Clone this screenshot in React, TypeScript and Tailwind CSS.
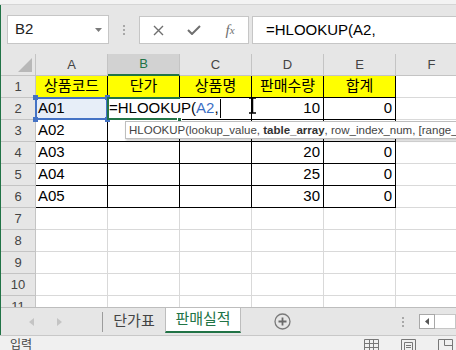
import React from 'react';

const cols = ['A', 'B', 'C', 'D', 'E', 'F'];
const headers = ['상품코드', '단가', '상품명', '판매수량', '합계'];
const rows = [
  ['A01', '', '', '10', '0'],
  ['A02', '', '', '', ''],
  ['A03', '', '', '20', '0'],
  ['A04', '', '', '25', '0'],
  ['A05', '', '', '30', '0'],
];

function GridRow({ n }: { n: number }) {
  return (
    <div className="flex h-[22px] shrink-0">
      <div className="w-[35px] shrink-0 border-r border-b border-[#c4c4c4] bg-[#e6e6e6] flex items-center justify-center text-[13px] text-[#444]">
        {n}
      </div>
      {cols.map((c, ci) => {
        const inTable = n <= 6 && ci < 5;
        const border = inTable ? 'border-black' : 'border-[#d9d9d9]';
        if (n === 1 && inTable) {
          return (
            <div key={c} className={`w-[72px] shrink-0 border-r border-b ${border} bg-[#ffff00] flex items-center justify-center text-[15px] text-black`}>
              {headers[ci]}
            </div>
          );
        }
        const value = inTable ? rows[n - 2][ci] : '';
        const right = ci >= 3;
        if (n === 2 && ci === 0) {
          return (
            <div key={c} className={`relative w-[72px] shrink-0 border-r border-b ${border} bg-[#e7eef8] flex items-center pl-[2px] text-[15px] text-black`}>
              {value}
              <div className="absolute -left-[1px] -top-[1px] w-[73px] h-[23px] border-2 border-[#4472c4]" />
              <div className="absolute -left-[3px] -top-[3px] w-[5px] h-[5px] bg-[#4472c4]" />
              <div className="absolute -right-[3px] -top-[3px] w-[5px] h-[5px] bg-[#4472c4]" />
              <div className="absolute -left-[3px] -bottom-[3px] w-[5px] h-[5px] bg-[#4472c4]" />
              <div className="absolute -right-[3px] -bottom-[3px] w-[5px] h-[5px] bg-[#4472c4]" />
            </div>
          );
        }
        if (n === 2 && ci === 1) {
          return (
            <div key={c} className={`relative w-[72px] shrink-0 border-r border-b ${border} bg-white`}>
              <div className="absolute -left-[1px] -top-[1px] w-[73px] h-[23px] border-2 border-[#217346]" />
              <div className="absolute left-[1px] top-[1px] h-[19px] bg-white border-r border-black pr-[1px] flex items-center whitespace-nowrap text-[15px] text-black">
                =HLOOKUP(<span className="text-[#3b6fc4]">A2</span>,
              </div>
              <div className="absolute -right-[3px] -bottom-[3px] w-[5px] h-[5px] bg-[#217346] border border-white" />
            </div>
          );
        }
        return (
          <div
            key={c}
            className={`w-[72px] shrink-0 border-r border-b ${border} bg-white flex items-center text-[15px] text-black ${right ? 'justify-end pr-[3px]' : 'pl-[2px]'}`}
          >
            {value}
          </div>
        );
      })}
    </div>
  );
}

export default function App() {
  return (
    <div className="relative w-[456px] h-[350px] overflow-hidden bg-[#e6e6e6] font-['Liberation_Sans','Noto_Sans_CJK_KR',sans-serif] text-[#222]">
      {/* ribbon edge */}
      <div className="h-[5px] bg-[#f3f3f3] border-b border-[#d5d5d5]" />

      <div className="flex flex-col h-[330px] border-l border-[#217346]">
        {/* Formula bar */}
        <div className="h-[49px] shrink-0 flex items-start pt-[10px] pl-[6px]">
          <div className="w-[102px] h-[29px] shrink-0 bg-white border border-[#c6c6c6] flex items-center pl-[7px] pr-[6px] text-[15px] text-[#222]">
            <span className="flex-1">B2</span>
            <svg width="7" height="4" viewBox="0 0 7 4">
              <path d="M0 0h7L3.5 4z" fill="#7a7a7a" />
            </svg>
          </div>
          <div className="w-[30px] h-[29px] shrink-0 flex flex-col items-center justify-center gap-[2px]">
            <div className="w-[2px] h-[2px] bg-[#a8a8a8]" />
            <div className="w-[2px] h-[2px] bg-[#a8a8a8]" />
            <div className="w-[2px] h-[2px] bg-[#a8a8a8]" />
          </div>
          <div className="mt-[1px] w-[110px] h-[28px] shrink-0 bg-white border border-[#c6c6c6] flex items-center">
            <div className="w-[36px] flex justify-center">
              <svg width="11" height="11" viewBox="0 0 11 11">
                <path d="M1 1l9 9M10 1l-9 9" stroke="#6f6f6f" strokeWidth="1.4" />
              </svg>
            </div>
            <div className="w-[36px] flex justify-center">
              <svg width="14" height="10" viewBox="0 0 14 10">
                <path d="M1 5l4 4 8-8" stroke="#6f6f6f" strokeWidth="2" fill="none" />
              </svg>
            </div>
            <div className="w-[36px] flex justify-center font-['Liberation_Serif',serif] italic text-[15px] text-[#6f6f6f] leading-none">
              f<span className="text-[11px] relative top-[2px]">x</span>
            </div>
          </div>
          <div className="ml-[3px] mt-[1px] flex-1 h-[28px] bg-white border-y border-l border-[#c6c6c6] flex items-center pl-[13px] text-[15px] text-black">
            =HLOOKUP(A2,
          </div>
        </div>

        {/* Grid */}
        <div className="flex-1 min-h-0 overflow-hidden bg-white flex flex-col">
          <div className="flex h-[22px] shrink-0">
            <div className="w-[35px] shrink-0 border-r border-b border-[#c4c4c4] bg-[#e6e6e6] flex items-end justify-end pr-[3px] pb-[3px]">
              <svg width="14" height="14" viewBox="0 0 14 14">
                <path d="M14 0v14H0z" fill="#b8b8b8" />
              </svg>
            </div>
            {cols.map((c) =>
              c === 'B' ? (
                <div key={c} className="w-[72px] shrink-0 border-r border-[#c4c4c4] border-b-2 border-b-[#217346] bg-[#d2d2d2] flex items-center justify-center text-[13px] text-[#217346]">
                  {c}
                </div>
              ) : (
                <div key={c} className="w-[72px] shrink-0 border-r border-b border-[#c4c4c4] bg-[#e6e6e6] flex items-center justify-center text-[13px] text-[#444]">
                  {c}
                </div>
              )
            )}
          </div>
          {[1, 2, 3, 4, 5, 6, 7, 8, 9, 10, 11].map((n) => (
            <GridRow key={n} n={n} />
          ))}
        </div>

        {/* Sheet tabs */}
        <div className="h-[28px] shrink-0 border-t border-[#bdbdbd] flex items-center">
          <div className="w-[101px] shrink-0 flex items-center">
            <svg className="ml-[28px]" width="5" height="8" viewBox="0 0 5 8">
              <path d="M5 0v8L0 4z" fill="#c4c4c4" />
            </svg>
            <svg className="ml-[23px]" width="5" height="8" viewBox="0 0 5 8">
              <path d="M0 0v8l5-4z" fill="#c4c4c4" />
            </svg>
          </div>
          <div className="w-px h-[20px] bg-[#9c9c9c] shrink-0" />
          <div className="w-[62px] shrink-0 flex items-center justify-center text-[15px] text-[#444]">단가표</div>
          <div className="self-start w-[76px] h-[25px] shrink-0 bg-white border-x border-[#bdbdbd] border-b-2 border-b-[#217346] flex items-center justify-center text-[15px] text-[#217346]">
            판매실적
          </div>
          <svg className="ml-[33px] shrink-0" width="17" height="17" viewBox="0 0 17 17">
            <circle cx="8.5" cy="8.5" r="7.5" stroke="#7a7a7a" strokeWidth="1.3" fill="none" />
            <path d="M8.5 4.5v8M4.5 8.5h8" stroke="#6a6a6a" strokeWidth="1.8" />
          </svg>
          <div className="ml-[111px] shrink-0 flex flex-col gap-[2px]">
            <div className="w-[2px] h-[2px] bg-[#a8a8a8]" />
            <div className="w-[2px] h-[2px] bg-[#a8a8a8]" />
            <div className="w-[2px] h-[2px] bg-[#a8a8a8]" />
          </div>
          <div className="ml-[15px] w-[16px] h-[15px] shrink-0 bg-white border border-[#a8a8a8] flex items-center justify-center">
            <svg width="4" height="7" viewBox="0 0 4 7">
              <path d="M4 0v7L0 3.5z" fill="#555" />
            </svg>
          </div>
          <div className="flex-1 h-[15px] bg-white border-y border-r border-[#c6c6c6]" />
        </div>
      </div>

      {/* Status bar */}
      <div className="h-[15px] bg-[#f0f0f0] border-t border-[#c8c8c8] flex items-start">
        <span className="ml-[10px] mt-[3px] whitespace-nowrap text-[12px] leading-[13px] text-[#444]">입력</span>
        <svg className="ml-[332px] mt-[3px]" width="15" height="13" viewBox="0 0 15 13">
          <path d="M0.5 0.5h14v12h-14zM0.5 4.5h14M0.5 8.5h14M5.5 0.5v12M9.5 0.5v12" stroke="#777" fill="none" />
        </svg>
        <svg className="ml-[22px] mt-[3px]" width="15" height="13" viewBox="0 0 15 13">
          <path d="M0.5 0.5h14v12h-14zM3.5 3.5h8v9h-8zM5 6.5h5M5 8.5h5" stroke="#777" fill="none" />
        </svg>
        <svg className="ml-[22px] mt-[3px]" width="15" height="13" viewBox="0 0 15 13">
          <path d="M0.5 0.5h14v12h-14zM6.5 0.5v6h8" stroke="#777" fill="none" />
        </svg>
      </div>

      {/* I-beam mouse cursor */}
      <svg className="absolute left-[248px] top-[96px]" width="9" height="19" viewBox="0 0 9 19">
        <path d="M1 2h7M1 17h7M4.5 2v15" stroke="#000" strokeWidth="1.5" />
      </svg>

      {/* Function tooltip */}
      <div className="absolute left-[125px] top-[121px] h-[18px] pl-[3px] pr-[2px] bg-white border border-[#bebebe] shadow-[1px_2px_2px_rgba(0,0,0,0.18)] whitespace-nowrap text-[11.5px] leading-[16px] text-[#444]">
        HLOOKUP(lookup_value, <b className="font-bold text-[#333]">table_array</b>, row_index_num, [range_lookup])
      </div>
    </div>
  );
}
